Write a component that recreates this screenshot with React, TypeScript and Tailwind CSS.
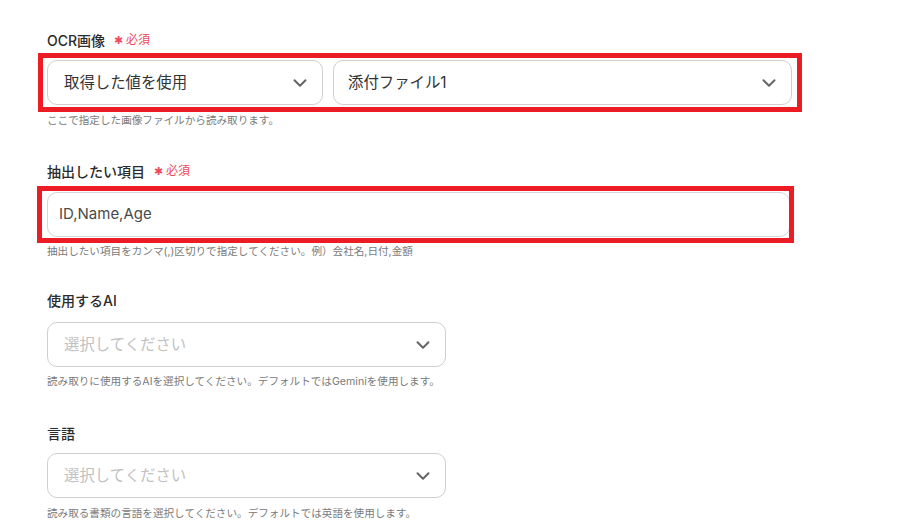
import { ChevronDown } from "lucide-react";

const font = { fontFamily: "Inter, 'Noto Sans CJK JP', sans-serif" };

const Required = () => (
    <span className="ml-[9px] inline-flex items-center gap-[3px] text-[12px] font-normal text-[#ee4a5c]">
        <span className="text-[11px] leading-none">✱</span>
        必須
    </span>
);

const Label = ({ text, required, className = "" }: { text: string; required?: boolean; className?: string }) => (
    <div className={`flex h-[20px] items-center text-[14px] font-medium text-[#2b2b2b] ${className}`}>
        {text}
        {required && <Required />}
    </div>
);

const Help = ({ text, className = "" }: { text: string; className?: string }) => (
    <p className={`text-[10.6px] leading-[14px] text-[#7a7a7a] ${className}`}>{text}</p>
);

const Select = ({ value, placeholder, className = "" }: { value?: string; placeholder?: string; className?: string }) => (
    <div
        className={`flex h-[45px] items-center justify-between rounded-[10px] border border-[#cfcfcf] bg-white pr-[11px] ${className}`}
    >
        <span className={`text-[15.4px] ${value ? "text-[#333]" : "text-[#c2c2c2]"}`}>{value ?? placeholder}</span>
        <ChevronDown size={22} strokeWidth={2.2} className="text-[#666]" />
    </div>
);

export default function App() {
    return (
        <div style={font} className="min-h-[529px] w-[898px] bg-white pl-[47px] pt-[30px]">
            {/* OCR画像 */}
            <Label text="OCR画像" required />
            <div className="relative mt-[10px] flex w-[745px] gap-[10px]">
                <Select value="取得した値を使用" className="w-[276px] pl-[16px]" />
                <Select value="添付ファイル1" className="flex-1 pl-[14px]" />
                <div className="pointer-events-none absolute -top-[7px] -left-[9px] -right-[10px] -bottom-[7px] border-[5px] border-[#ec1c24]" />
            </div>
            <Help text="ここで指定した画像ファイルから読み取ります。" className="mt-[9px]" />

            {/* 抽出したい項目 */}
            <Label text="抽出したい項目" required className="mt-[33px]" />
            <div className="relative mt-[11px] w-[743px]">
                <div className="flex h-[45px] items-center rounded-[10px] border border-[#d3d6dc] bg-white pl-[11px] text-[15px] text-[#4a4a4a]">
                    ID,Name,Age
                </div>
                <div className="pointer-events-none absolute -top-[6px] -left-[10px] -right-[4px] -bottom-[6px] border-[5px] border-[#ec1c24]" />
            </div>
            <Help text="抽出したい項目をカンマ(,)区切りで指定してください。例）会社名,日付,金額" className="mt-[8px]" />

            {/* 使用するAI */}
            <Label text="使用するAI" className="mt-[31px]" />
            <Select placeholder="選択してください" className="mt-[12px] w-[399px] pl-[16px]" />
            <Help text="読み取りに使用するAIを選択してください。デフォルトではGeminiを使用します。" className="mt-[8px]" />

            {/* 言語 */}
            <Label text="言語" className="mt-[34px]" />
            <Select placeholder="選択してください" className="mt-[10px] w-[399px] pl-[16px]" />
            <Help text="読み取る書類の言語を選択してください。デフォルトでは英語を使用します。" className="mt-[9px]" />
        </div>
    );
}
